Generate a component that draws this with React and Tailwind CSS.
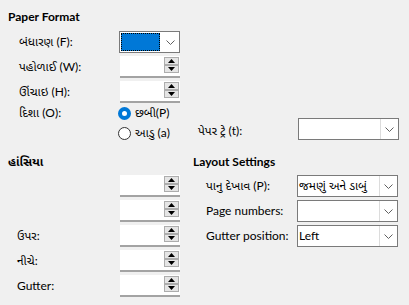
import React from "react";

function Chevron() {
  return (
    <svg width="9" height="5" viewBox="0 0 9 5">
      <path d="M0.5 0.5 L4.5 4.5 L8.5 0.5" fill="none" stroke="#606060" strokeWidth="1" />
    </svg>
  );
}

function Combo({ value, selected, wide }) {
  return (
    <div
      className={
        "flex h-[22px] border border-[#7a7a7a] bg-white " +
        (wide ? "w-[101px]" : "w-[61px]")
      }
    >
      <div className="flex-1 min-w-0 flex items-center overflow-hidden">
        {selected ? (
          <div className="h-full w-full p-px">
            <div className="h-full w-full bg-[#0078d7] border border-dotted border-black" />
          </div>
        ) : (
          <span className="pl-[1px] whitespace-nowrap">{value}</span>
        )}
      </div>
      <div
        className={
          "w-[18px] shrink-0 flex items-center justify-center " +
          (selected ? "" : "border-l border-[#dcdcdc]")
        }
      >
        <Chevron />
      </div>
    </div>
  );
}

function SpinBtn({ up }) {
  return (
    <div className="h-[8px] w-[15px] border border-[#adadad] bg-[#e5e5e5] flex items-center justify-center">
      <svg width="7" height="4" viewBox="0 0 7 4">
        {up ? <path d="M3.5 0 L7 4 L0 4 Z" fill="#000" /> : <path d="M0 0 L7 0 L3.5 4 Z" fill="#000" />}
      </svg>
    </div>
  );
}

function Spin() {
  return (
    <div className="flex w-[60px] h-[22px] bg-white border-b-2 border-[#a3a3a3] ml-[1px]">
      <div className="flex-1" />
      <div className="flex flex-col pt-[1px] pr-[1px]">
        <SpinBtn up />
        <SpinBtn />
      </div>
    </div>
  );
}

function Radio({ checked, label }) {
  return (
    <div className="h-[20px] flex items-center gap-[4px]">
      {checked ? (
        <div className="w-[13px] h-[13px] rounded-full border-[4px] border-[#0078d7] bg-white" />
      ) : (
        <div className="w-[13px] h-[13px] rounded-full border border-[#333333] bg-white" />
      )}
      <span>{label}</span>
    </div>
  );
}

export default function App() {
  return (
    <div className="w-[409px] h-[305px] bg-[#f0f0f0] text-[12px] leading-none text-black overflow-hidden font-stretch-[80%] font-['Lato','Noto_Sans_Gujarati','Noto_Sans',sans-serif]">
      <div className="pt-[9px] pl-[8px]">
        <div className="h-[16px] flex items-center font-bold">Paper Format</div>
        <div className="mt-[6px] pl-[11px] flex flex-col gap-[3px]">
          <div className="flex items-center h-[22px]">
            <div className="w-[100px]">બંધારણ (F):</div>
            <Combo selected />
          </div>
          <div className="flex items-center h-[22px]">
            <div className="w-[100px]">પહોળાઈ (W):</div>
            <Spin />
          </div>
          <div className="flex items-center h-[22px]">
            <div className="w-[100px]">ઊંચાઇ (H):</div>
            <Spin />
          </div>
        </div>
        <div className="flex">
          <div className="w-[182px] pl-[11px] flex">
            <div className="w-[99px] h-[20px] flex items-center">દિશા (O):</div>
            <div className="flex flex-col">
              <Radio checked label="છબી(P)" />
              <Radio label="આડુ (a)" />
            </div>
          </div>
          <div className="pl-[8px] mt-[15px] flex items-center h-[22px]">
            <div className="w-[100px] mt-[4px]">પેપર ટ્રે (t):</div>
            <Combo wide />
          </div>
        </div>
        <div className="flex mt-[11px]">
          <div className="w-[182px]">
            <div className="h-[16px] flex items-center font-bold">હાંસિયા</div>
            <div className="mt-[5px] pl-[9px] flex flex-col gap-[3px]">
              <div className="flex items-center h-[22px]">
                <div className="w-[102px]"></div>
                <Spin />
              </div>
              <div className="flex items-center h-[22px]">
                <div className="w-[102px]"></div>
                <Spin />
              </div>
              <div className="flex items-center h-[22px]">
                <div className="w-[102px]">ઉપર:</div>
                <Spin />
              </div>
              <div className="flex items-center h-[22px]">
                <div className="w-[102px]">નીચે:</div>
                <Spin />
              </div>
              <div className="flex items-center h-[22px]">
                <div className="w-[102px]">Gutter:</div>
                <Spin />
              </div>
            </div>
          </div>
          <div className="pl-[3px]">
            <div className="h-[16px] flex items-center font-bold">Layout Settings</div>
            <div className="mt-[5px] pl-[13px] flex flex-col gap-[3px]">
              <div className="flex items-center h-[22px]">
                <div className="w-[91px]">પાનુ દેખાવ (P):</div>
                <Combo wide value="જમણું અને ડાબું" />
              </div>
              <div className="flex items-center h-[22px]">
                <div className="w-[91px]">Page numbers:</div>
                <Combo wide />
              </div>
              <div className="flex items-center h-[22px]">
                <div className="w-[91px]">Gutter position:</div>
                <Combo wide value="Left" />
              </div>
            </div>
          </div>
        </div>
      </div>
    </div>
  );
}
